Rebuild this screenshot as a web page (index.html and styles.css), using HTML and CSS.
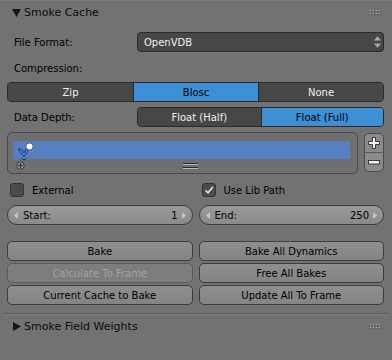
FILE: index.html
```html
<!DOCTYPE html>
<html>
<head>
<meta charset="utf-8">
<link rel="stylesheet" href="styles.css">
</head>
<body>
<div class="panel">
  <div class="phead">
    <svg class="tri" width="9" height="8" viewBox="0 0 9 8"><polygon points="0,0 9,0 4.5,8" fill="#151515"/></svg>
    <span class="ptitle">Smoke Cache</span>
    <svg class="grip" width="11" height="5" viewBox="0 0 11 5">
      <g fill="#4c4c4c"><rect x="1" y="1" width="1" height="1"/><rect x="4" y="1" width="1" height="1"/><rect x="7" y="1" width="1" height="1"/><rect x="10" y="1" width="1" height="1"/><rect x="1" y="4" width="1" height="1"/><rect x="4" y="4" width="1" height="1"/><rect x="7" y="4" width="1" height="1"/><rect x="10" y="4" width="1" height="1"/></g>
      <g fill="#b0b0b0"><rect x="0" y="0" width="1" height="1"/><rect x="3" y="0" width="1" height="1"/><rect x="6" y="0" width="1" height="1"/><rect x="9" y="0" width="1" height="1"/><rect x="0" y="3" width="1" height="1"/><rect x="3" y="3" width="1" height="1"/><rect x="6" y="3" width="1" height="1"/><rect x="9" y="3" width="1" height="1"/></g>
    </svg>
  </div>
  <div class="pbody">
    <div class="frow">
      <span class="lbl">File Format:</span>
      <div class="menu">
        <span>OpenVDB</span>
        <svg class="updown" width="7" height="14" viewBox="0 0 7 14"><polygon points="3.5,1 7,5.5 0,5.5" fill="#a8a8a8"/><polygon points="0,8.5 7,8.5 3.5,13" fill="#a8a8a8"/></svg>
      </div>
    </div>
    <div class="lblrow"><span class="lbl">Compression:</span></div>
    <div class="seg seg3">
      <div class="sb">Zip</div>
      <div class="sb on">Blosc</div>
      <div class="sb">None</div>
    </div>
    <div class="frow drow">
      <span class="lbl">Data Depth:</span>
      <div class="seg seg2">
        <div class="sb">Float (Half)</div>
        <div class="sb on">Float (Full)</div>
      </div>
    </div>
    <div class="listrow">
      <div class="list">
        <div class="litem">
          <svg class="licon" width="17" height="19" viewBox="0 0 17 19">
            <polygon points="1,7 7,15 12,7 9,7 7,11 4.5,7" fill="#4a7fd0" stroke="#1d3f78" stroke-width="1"/>
            <polygon points="3.5,16 7,18.5 10.5,16 7,17" fill="#243f6e"/>
            <circle cx="12.5" cy="4.5" r="3.6" fill="#f6f6f6" stroke="#4a4a4a" stroke-width="0.8"/>
          </svg>
        </div>
        <div class="lfoot">
          <svg class="addc" width="9" height="9" viewBox="0 0 9 9"><circle cx="4.5" cy="4.5" r="3.8" fill="#8a8a8a" stroke="#3c3c3c" stroke-width="1"/><path d="M4.5 2.2V6.8M2.2 4.5H6.8" stroke="#2c2c2c" stroke-width="1"/></svg>
          <svg class="drag" width="15" height="6" viewBox="0 0 15 6"><rect x="0" y="0" width="15" height="1" fill="#2a2a2a"/><rect x="0" y="1" width="15" height="1" fill="#b8b8b8"/><rect x="0" y="4" width="15" height="1" fill="#2a2a2a"/><rect x="0" y="5" width="15" height="1" fill="#b8b8b8"/></svg>
        </div>
      </div>
      <div class="pm">
        <div class="pmb">
          <svg width="12" height="12" viewBox="0 0 12 12"><path d="M4.5 0.5H7.5V4.5H11.5V7.5H7.5V11.5H4.5V7.5H0.5V4.5H4.5Z" fill="#f2f2f2" stroke="#3a3a3a" stroke-width="1"/></svg>
        </div>
        <div class="pmb">
          <svg width="12" height="5" viewBox="0 0 12 5"><rect x="0.5" y="0.5" width="11" height="3.5" fill="#f2f2f2" stroke="#3a3a3a" stroke-width="1"/></svg>
        </div>
      </div>
    </div>
    <div class="checks">
      <label class="chk"><span class="box"></span><span>External</span></label>
      <label class="chk"><span class="box"><svg width="12" height="12" viewBox="0 0 12 12"><path d="M2.5 6.3L5 8.8L10 2.8" fill="none" stroke="#e4e4e4" stroke-width="1.6"/></svg></span><span>Use Lib Path</span></label>
    </div>
    <div class="nums">
      <div class="num">
        <svg class="na" width="4" height="7" viewBox="0 0 4 7"><polygon points="4,0 4,7 0,3.5" fill="#c4c4c4"/></svg>
        <span class="nl">Start:</span><span class="nv">1</span>
        <svg class="na" width="4" height="7" viewBox="0 0 4 7"><polygon points="0,0 0,7 4,3.5" fill="#c4c4c4"/></svg>
      </div>
      <div class="num">
        <svg class="na" width="4" height="7" viewBox="0 0 4 7"><polygon points="4,0 4,7 0,3.5" fill="#c4c4c4"/></svg>
        <span class="nl">End:</span><span class="nv">250</span>
        <svg class="na" width="4" height="7" viewBox="0 0 4 7"><polygon points="0,0 0,7 4,3.5" fill="#c4c4c4"/></svg>
      </div>
    </div>
    <div class="btns">
      <div class="btn">Bake</div>
      <div class="btn">Bake All Dynamics</div>
      <div class="btn dis">Calculate To Frame</div>
      <div class="btn">Free All Bakes</div>
      <div class="btn">Current Cache to Bake</div>
      <div class="btn">Update All To Frame</div>
    </div>
  </div>
  <div class="sep"></div>
  <div class="phead closed">
    <svg class="tri" width="8" height="9" viewBox="0 0 8 9"><polygon points="0,0 8,4.5 0,9" fill="#151515"/></svg>
    <span class="ptitle">Smoke Field Weights</span>
    <svg class="grip" width="11" height="5" viewBox="0 0 11 5">
      <g fill="#4c4c4c"><rect x="1" y="1" width="1" height="1"/><rect x="4" y="1" width="1" height="1"/><rect x="7" y="1" width="1" height="1"/><rect x="10" y="1" width="1" height="1"/><rect x="1" y="4" width="1" height="1"/><rect x="4" y="4" width="1" height="1"/><rect x="7" y="4" width="1" height="1"/><rect x="10" y="4" width="1" height="1"/></g>
      <g fill="#b0b0b0"><rect x="0" y="0" width="1" height="1"/><rect x="3" y="0" width="1" height="1"/><rect x="6" y="0" width="1" height="1"/><rect x="9" y="0" width="1" height="1"/><rect x="0" y="3" width="1" height="1"/><rect x="3" y="3" width="1" height="1"/><rect x="6" y="3" width="1" height="1"/><rect x="9" y="3" width="1" height="1"/></g>
    </svg>
  </div>
</div>
</body>
</html>
```

FILE: styles.css
```css
html, body {
  margin: 0;
  padding: 0;
  background: #727272;
}
body {
  font-family: "DejaVu Sans", sans-serif;
  font-size: 10px;
  color: #000;
  width: 392px;
  height: 360px;
  overflow: hidden;
}
.panel {
  border-top: 1px solid #7d7d7d;
}
.phead {
  height: 23px;
  display: flex;
  align-items: center;
  padding-left: 12px;
  padding-right: 11px;
  font-size: 11px;
  color: #0c0c0c;
}
.phead .tri {
  margin-right: 3px;
}
.phead.closed .tri {
  margin-left: 1px;
  margin-right: 3px;
}
.ptitle {
  flex: 1;
}
.pbody {
  padding: 8px 8px 0 7px;
}
.frow {
  display: grid;
  grid-template-columns: 130px 1fr;
  height: 20px;
  align-items: center;
}
.lbl {
  padding-left: 7px;
}
.menu {
  height: 20px;
  box-sizing: border-box;
  background: #474747;
  border: 1px solid #2a2a2a;
  border-radius: 4px;
  color: #f0f0f0;
  display: flex;
  align-items: center;
  padding-left: 6px;
  padding-right: 2px;
}
.menu span {
  flex: 1;
}
.lblrow {
  height: 20px;
  margin-top: 6px;
  display: flex;
  align-items: center;
}
.seg {
  display: grid;
  height: 20px;
  box-sizing: border-box;
  border: 1px solid #2a2a2a;
  border-radius: 4px;
  overflow: hidden;
  margin-top: 4px;
}
.seg3 {
  grid-template-columns: 1fr 1fr 1fr;
}
.seg2 {
  grid-template-columns: 1fr 1fr;
  margin-top: 0;
}
.sb {
  background: #474747;
  color: #f0f0f0;
  display: flex;
  align-items: center;
  justify-content: center;
  border-left: 1px solid #2a2a2a;
}
.sb:first-child {
  border-left: none;
}
.sb.on {
  background: #3d8fd6;
  color: #000;
}
.drow {
  margin-top: 5px;
}
.listrow {
  display: flex;
  margin-top: 5px;
  gap: 6px;
  align-items: flex-start;
}
.list {
  flex: 1;
  height: 42px;
  box-sizing: border-box;
  border: 1px solid #4a4a4a;
  border-radius: 5px;
  background: #6f6f6f;
  padding: 8px 7px 0 5px;
}
.litem {
  height: 18px;
  background: #5680c2;
  display: flex;
  align-items: flex-start;
  padding-left: 4px;
  position: relative;
}
.licon {
  margin-top: 1px;
}
.lfoot {
  position: relative;
  height: 12px;
}
.addc {
  position: absolute;
  left: 3px;
  top: 2px;
}
.drag {
  position: absolute;
  left: 170px;
  top: 4px;
}
.pm {
  width: 20px;
  height: 39px;
  box-sizing: border-box;
  border: 1px solid #4a4a4a;
  border-radius: 5px;
  background: #8a8a8a;
  display: flex;
  flex-direction: column;
  margin-top: 1px;
}
.pmb {
  flex: 1;
  display: flex;
  align-items: center;
  justify-content: center;
}
.pmb + .pmb {
  border-top: 1px solid #5a5a5a;
}
.checks {
  display: grid;
  grid-template-columns: 1fr 1fr;
  column-gap: 6px;
  height: 20px;
  margin-top: 6px;
  align-items: center;
}
.chk {
  display: flex;
  align-items: center;
  padding-left: 3px;
}
.box {
  width: 14px;
  height: 14px;
  box-sizing: border-box;
  background: #4b4b4b;
  border: 1px solid #333;
  border-radius: 3px;
  margin-right: 8px;
  display: flex;
  align-items: center;
  justify-content: center;
}
.nums {
  display: grid;
  grid-template-columns: 1fr 1fr;
  column-gap: 6px;
  margin-top: 5px;
}
.num {
  height: 20px;
  box-sizing: border-box;
  border: 1px solid #3c3c3c;
  border-radius: 10px;
  background: linear-gradient(#9a9a9a, #8a8a8a);
  display: flex;
  align-items: center;
  padding: 0 6px 0 6px;
}
.nl {
  flex: 1;
  margin-left: 5px;
}
.nv {
  margin-right: 4px;
}
.btns {
  display: grid;
  grid-template-columns: 1fr 1fr;
  column-gap: 6px;
  row-gap: 2px;
  margin-top: 16px;
}
.btn {
  height: 20px;
  box-sizing: border-box;
  border: 1px solid #3c3c3c;
  border-radius: 5px;
  background: linear-gradient(#8e8e8e, #848484);
  display: flex;
  align-items: center;
  justify-content: center;
}
.btn.dis {
  border-color: #5a5a5a;
  background: #7d7d7d;
  color: #a2a2a2;
}
.sep {
  margin: 8px 4px 0 4px;
  height: 1px;
  background: #5a5a5a;
  border-bottom: 1px solid #808080;
}
```
